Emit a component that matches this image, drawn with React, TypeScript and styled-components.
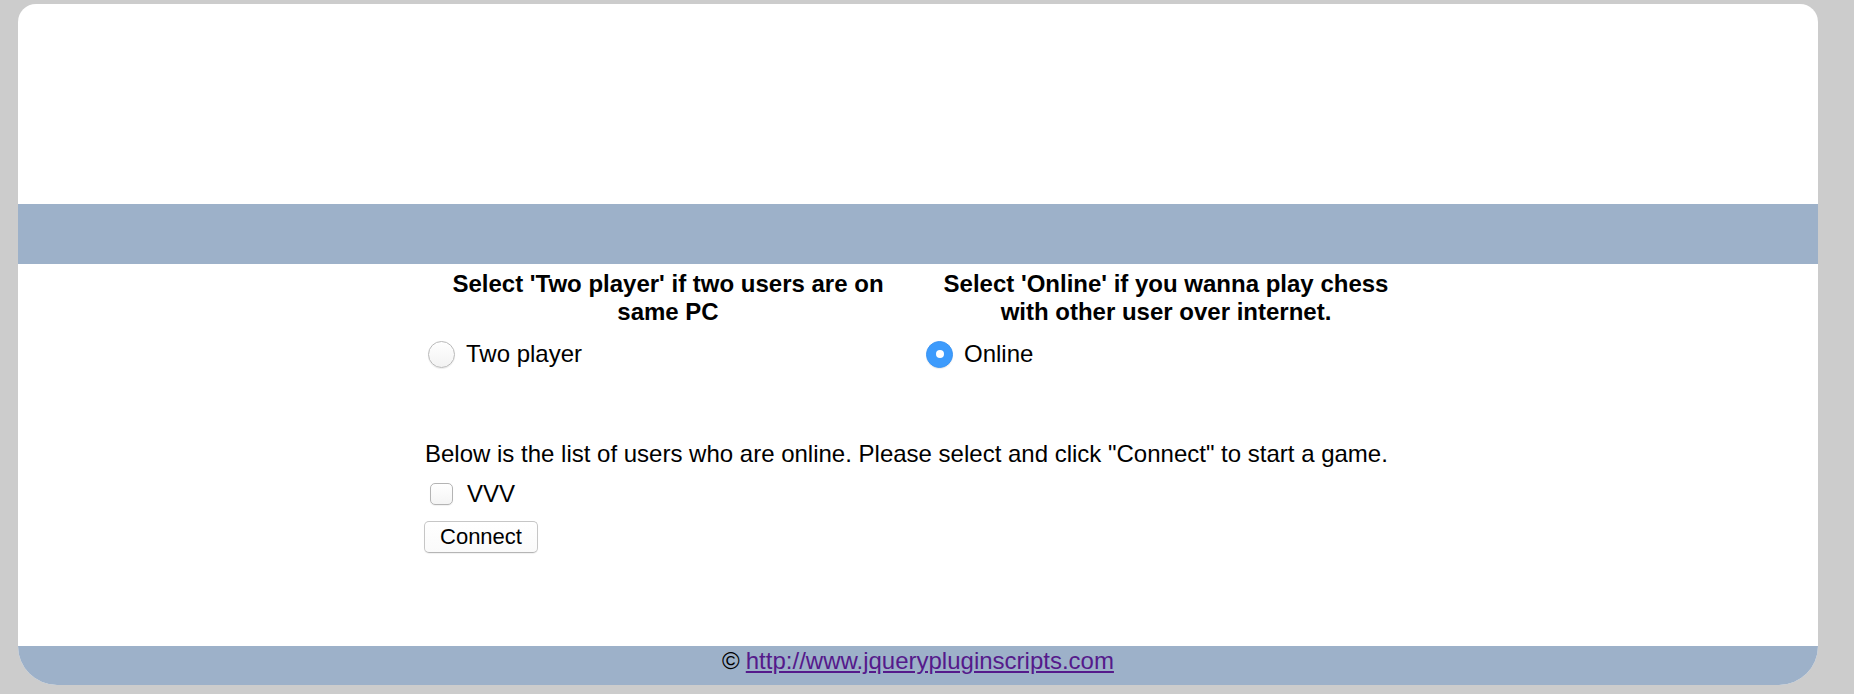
import React from "react";
import styled, { createGlobalStyle } from "styled-components";

const GlobalStyle = createGlobalStyle`
  html, body {
    margin: 0;
    padding: 0;
    background: #cccccc;
  }
  body {
    font-family: "Liberation Sans", Arial, Helvetica, sans-serif;
    color: #000;
  }
  * { box-sizing: border-box; }
`;

const Page = styled.div`
  padding: 4px 36px 9px 18px;
  width: 1854px;
`;

const Card = styled.div`
  width: 1800px;
  background: #ffffff;
  border-radius: 18px 18px 39px 39px;
  overflow: hidden;
  display: flex;
  flex-direction: column;
`;

const Header = styled.div`
  height: 200px;
`;

const Band = styled.div`
  height: 60px;
  background: #9db1c9;
`;

const Content = styled.div`
  height: 382px;
  display: flex;
  flex-direction: column;
  align-items: center;
  padding-top: 6px;
`;

const Inner = styled.div`
  width: 992px;
  display: flex;
  flex-direction: column;
`;

const Modes = styled.div`
  display: grid;
  grid-template-columns: 498px 494px;
`;

const Mode = styled.div`
  display: flex;
  flex-direction: column;
`;

const ModeTitle = styled.h3`
  margin: 0;
  width: 492px;
  font-size: 24px;
  font-weight: bold;
  line-height: 27.5px;
  text-align: center;
`;

const OptionLabel = styled.label`
  display: flex;
  align-items: center;
  gap: 11px;
  margin-top: 15px;
  padding-left: 6px;
  font-size: 24px;
  height: 28px;
`;

const Radio = styled.input.attrs({ type: "radio" })`
  appearance: none;
  -webkit-appearance: none;
  margin: 0;
  width: 27px;
  height: 27px;
  border-radius: 50%;
  border: 1px solid #b9b9b9;
  background: linear-gradient(#ffffff, #f2f2f2);
  box-shadow: 0 1px 1px rgba(0, 0, 0, 0.08);
  display: inline-grid;
  place-items: center;
  flex: none;

  &:checked {
    border-color: #3a95f5;
    background: #3d9bfc;
  }
  &:checked::after {
    content: "";
    width: 8px;
    height: 8px;
    border-radius: 50%;
    background: #ffffff;
  }
`;

const Info = styled.p`
  margin: 72px 0 0 0;
  padding-left: 3px;
  font-size: 24px;
  line-height: 28px;
`;

const UserRow = styled.label`
  display: flex;
  align-items: center;
  gap: 14px;
  margin-top: 12px;
  padding-left: 8px;
  height: 28px;
  font-size: 24px;
`;

const Checkbox = styled.input.attrs({ type: "checkbox" })`
  appearance: none;
  -webkit-appearance: none;
  margin: 0;
  width: 23px;
  height: 22px;
  border-radius: 5px;
  border: 1px solid #b4b4b4;
  background: linear-gradient(#ffffff, #f4f4f4);
  box-shadow: 0 1px 1px rgba(0, 0, 0, 0.06);
  flex: none;
`;

const ConnectButton = styled.button`
  align-self: flex-start;
  margin: 13px 0 0 2px;
  height: 32px;
  padding: 0 14px;
  font-family: "Liberation Sans", Arial, Helvetica, sans-serif;
  font-size: 22px;
  color: #000;
  background: linear-gradient(#ffffff, #fafafa);
  border: 1px solid #c6c6c6;
  border-bottom-color: #b5b5b5;
  border-radius: 5px;
  box-shadow: 0 1px 1px rgba(0, 0, 0, 0.06);
  width: 114px;
`;

const Footer = styled.div`
  height: 39px;
  background: #9db1c9;
  display: flex;
  justify-content: center;
  align-items: flex-start;
  padding-top: 1px;
  font-size: 24px;
  line-height: 28px;
  gap: 6px;
`;

const FooterLink = styled.a`
  color: #551a8b;
  text-decoration: underline;
`;

export default function App() {
  return (
    <>
      <GlobalStyle />
      <Page>
        <Card>
          <Header />
          <Band />
          <Content>
            <Inner>
              <Modes>
                <Mode>
                  <ModeTitle>Select 'Two player' if two users are on same PC</ModeTitle>
                  <OptionLabel>
                    <Radio name="mode" value="two" />
                    Two player
                  </OptionLabel>
                </Mode>
                <Mode>
                  <ModeTitle>Select 'Online' if you wanna play chess with other user over internet.</ModeTitle>
                  <OptionLabel>
                    <Radio name="mode" value="online" defaultChecked />
                    Online
                  </OptionLabel>
                </Mode>
              </Modes>
              <Info>
                Below is the list of users who are online. Please select and click "Connect" to start a game.
              </Info>
              <UserRow>
                <Checkbox />
                VVV
              </UserRow>
              <ConnectButton>Connect</ConnectButton>
            </Inner>
          </Content>
          <Footer>
            <span>©</span>
            <FooterLink href="#">http://www.jquerypluginscripts.com</FooterLink>
          </Footer>
        </Card>
      </Page>
    </>
  );
}
